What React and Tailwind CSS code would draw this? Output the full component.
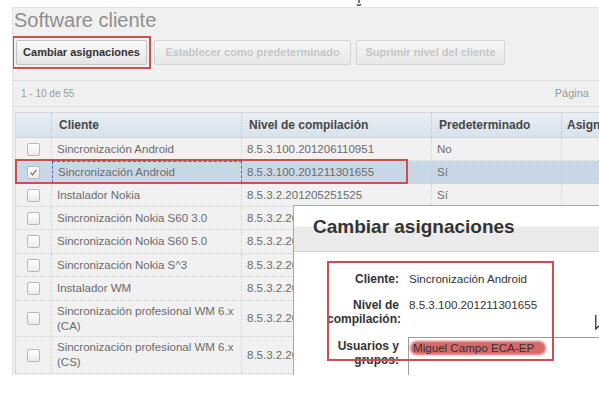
import React from "react";

const rows = [
  { h: "h-[23px]", name: "Sincronización Android", ver: "8.5.3.100.201206110951", def: "No" },
  { h: "h-[23px]", name: "Sincronización Android", ver: "8.5.3.100.201211301655", def: "Sí", selected: true },
  { h: "h-[23px]", name: "Instalador Nokia", ver: "8.5.3.2.201205251525", def: "Sí" },
  { h: "h-[23px]", name: "Sincronización Nokia S60 3.0", ver: "8.5.3.2.201205251525", def: "Sí" },
  { h: "h-[24px]", name: "Sincronización Nokia S60 5.0", ver: "8.5.3.2.201205251525", def: "Sí" },
  { h: "h-[23px]", name: "Sincronización Nokia S^3", ver: "8.5.3.2.201205251525", def: "Sí" },
  { h: "h-[24px]", name: "Instalador WM", ver: "8.5.3.2.201205251525", def: "Sí" },
  { h: "h-[36px]", name: "Sincronización profesional WM 6.x (CA)", ver: "8.5.3.2.201205251525", def: "Sí" },
  { h: "h-[37px]", name: "Sincronización profesional WM 6.x (CS)", ver: "8.5.3.2.201205251525", def: "Sí" },
];

function Checkbox({ checked }) {
  return (
    <div className="w-[13px] h-[13px] border border-[#b8b8b8] rounded-[2px] bg-gradient-to-b from-[#ffffff] to-[#ececec] flex items-center justify-center">
      {checked && (
        <svg width="9" height="9" viewBox="0 0 9 9">
          <path d="M1.5 4.5 L3.6 6.8 L7.5 1.8" fill="none" stroke="#888" strokeWidth="1.4" />
        </svg>
      )}
    </div>
  );
}

export default function App() {
  return (
    <div className="relative w-[599px] h-[397px] bg-white overflow-hidden font-['Liberation_Sans',Arial,sans-serif]">
      {/* stray cursor mark at the top */}
      <svg className="absolute left-[355px] top-0" width="8" height="6" viewBox="0 0 8 6">
        <path d="M4 0 L4 3 M2 4.5 Q4 6 6 4.5" fill="none" stroke="#222" strokeWidth="1.2" />
      </svg>

      {/* MAIN PANEL */}
      <div className="ml-[12px] mt-[7px] h-[368px] bg-[#f0f0f0] border-t border-l border-[#e2e2e2] overflow-hidden">
        <div className="pl-[1px] text-[20px] leading-[24px] text-[#8f8f8f]">Software cliente</div>

        {/* BUTTONS */}
        <div className="flex items-center mt-[4px] ml-[-1px]">
          <div className="border-2 border-[#c9504e] p-[2px]">
            <div className="w-[131px] h-[25px] border border-[#c4c4c4] rounded-[2px] bg-gradient-to-b from-[#fafafa] to-[#e4e4e4] flex items-center justify-center text-[11px] font-bold text-[#333]">
              Cambiar asignaciones
            </div>
          </div>
          <div className="ml-[3px] w-[197px] h-[25px] border border-[#d4d4d4] rounded-[2px] bg-gradient-to-b from-[#f6f6f6] to-[#e8e8e8] flex items-center justify-center text-[11px] font-bold text-[#c6c6c6]">
            Establecer como predeterminado
          </div>
          <div className="ml-[5px] w-[149px] h-[25px] border border-[#d4d4d4] rounded-[2px] bg-gradient-to-b from-[#f6f6f6] to-[#e8e8e8] flex items-center justify-center text-[11px] font-bold text-[#c6c6c6]">
            Suprimir nivel del cliente
          </div>
        </div>

        {/* PAGER */}
        <div className="mt-[11px] h-[27px] border-y border-[#dcdcdc] bg-[#f0f0f0] flex items-center justify-between pl-[8px] pr-[10px] text-[10px] text-[#9a9a9a]">
          <span>1 - 10 de 55</span>
          <span className="text-[11px]">Página</span>
        </div>

        {/* TABLE */}
        <div className="mt-[5px] ml-[2px] border-l border-t border-[#d6d6d6]">
          <div className="flex h-[25px] bg-gradient-to-b from-[#e9eff4] to-[#d8e2ea] border-b border-[#cfd8df] text-[12px] font-bold text-[#474747]">
            <div className="w-[36px] shrink-0 border-r border-dotted border-[#b9c3cb]" />
            <div className="w-[190px] shrink-0 border-r border-dotted border-[#b9c3cb] flex items-center pl-[7px]">Cliente</div>
            <div className="w-[190px] shrink-0 border-r border-dotted border-[#b9c3cb] flex items-center pl-[7px]">Nivel de compilación</div>
            <div className="w-[130px] shrink-0 border-r border-dotted border-[#b9c3cb] flex items-center pl-[7px]">Predeterminado</div>
            <div className="flex-1 flex items-center pl-[5px] whitespace-nowrap overflow-hidden">Asignaciones</div>
          </div>

          {rows.map((r, i) => (
            <div
              key={i}
              className={`relative flex ${r.h} border-b border-dotted border-[#d0d0d0] text-[11.5px] leading-[15px] text-[#6b6b6b] ${
                r.selected ? "bg-[#c9d8e7]" : "bg-[#f1f1f1]"
              }`}
            >
              <div className="w-[36px] shrink-0 border-r border-dotted border-[#cfcfcf] flex items-center justify-center">
                <Checkbox checked={r.selected} />
              </div>
              <div
                className={`w-[190px] shrink-0 flex items-center pl-[5px] pr-[2px] ${
                  r.selected ? "border border-dashed border-[#5a64c8]" : "border-r border-dotted border-[#cfcfcf]"
                }`}
              >
                {r.name}
              </div>
              <div className="w-[190px] shrink-0 border-r border-dotted border-[#cfcfcf] flex items-center pl-[5px] whitespace-nowrap">
                {r.ver}
              </div>
              <div className="w-[130px] shrink-0 border-r border-dotted border-[#cfcfcf] flex items-center pl-[5px]">
                {r.def}
              </div>
              <div className="flex-1" />
              {r.selected && (
                <div className="absolute left-[-1px] top-[-2px] w-[393px] h-[25px] border-2 border-[#c9504e]" />
              )}
            </div>
          ))}
        </div>
      </div>

      {/* DIALOG */}
      <div className="absolute left-[293px] top-[205px] right-0 h-[170px] bg-white border-l border-t border-[#a8a8a8] overflow-hidden">
        <div className="relative h-[46px] bg-gradient-to-b from-[#ffffff] from-[45%] to-[#ebebeb] to-[46%] border-b border-[#cfcfcf]">
          <div className="absolute left-[19px] top-[9px] text-[19px] leading-[24px] font-bold text-[#333]">Cambiar asignaciones</div>
        </div>

        <div className="relative">
          <div className="grid grid-cols-[72px_1fr] gap-x-[10px] text-[12px] leading-[14px] text-[#333] pl-[33px] pt-[20px]">
            <div className="text-right font-bold">Cliente:</div>
            <div className="text-[11.6px]">Sincronización Android</div>

            <div className="text-right font-bold mt-[12px]">Nivel de compilación:</div>
            <div className="mt-[12px] text-[11.6px]">8.5.3.100.201211301655</div>

            <div className="text-right font-bold mt-[13px]">Usuarios y grupos:</div>
            <div className="relative mt-[11px] -ml-[1px] h-[60px] border-l border-t border-[#9a9a9a] pl-[4px] pt-[3px] text-[11.6px] text-[#333]">
              <span className="relative">
                <span className="absolute left-[-3px] right-[-12px] top-[0px] h-[14px] bg-[#cf4444] opacity-80 rounded-[7px] blur-[1.2px]" />
                <span className="relative">Miguel Campo ECA-EP</span>
              </span>
            </div>
          </div>

          {/* annotation box */}
          <div className="absolute left-[33px] top-[9px] w-[227px] h-[100px] border-2 border-[#c9504e]" />
        </div>

        {/* partial glyph at the right edge */}
        <svg className="absolute right-0 top-[108px]" width="4" height="16" viewBox="0 0 4 16">
          <path d="M0.8 1 L0.8 15 L4 12" fill="none" stroke="#222" strokeWidth="1.2" />
        </svg>
      </div>
    </div>
  );
}
